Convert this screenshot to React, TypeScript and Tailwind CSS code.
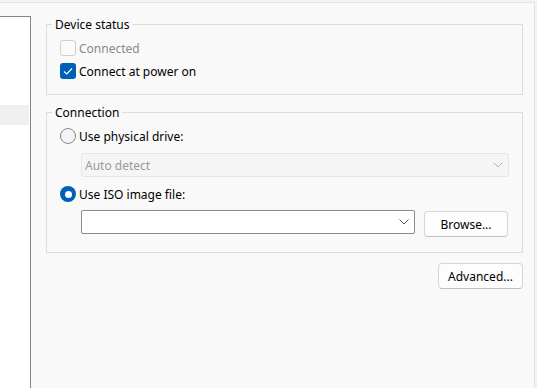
const Chevron = ({ color }: { color: string }) => (
  <svg width="10" height="6" viewBox="0 0 10 6" fill="none">
    <path d="M0.5 0.5 L5 5 L9.5 0.5" stroke={color} strokeWidth="1" />
  </svg>
);

const CheckRow = ({ label, checked, disabled }: { label: string; checked?: boolean; disabled?: boolean }) => (
  <div className="flex items-start h-[16px] gap-[3px]">
    {checked ? (
      <span className="w-[16px] h-[16px] rounded-[3px] bg-[#005fb8] flex items-center justify-center">
        <svg width="16" height="16" viewBox="0 0 16 16" fill="none">
          <path d="M4 8.5 L6.8 11 L12 5.5" stroke="#ffffff" strokeWidth="1.1" />
        </svg>
      </span>
    ) : (
      <span className="w-[16px] h-[16px] rounded-[3px] border border-[#cfcfcf] bg-[#fbfbfb]" />
    )}
    <span className={`h-[16px] leading-[18px] ${disabled ? 'text-[#8a8a8a]' : 'text-black'}`}>{label}</span>
  </div>
);

const RadioRow = ({ label, selected }: { label: string; selected?: boolean }) => (
  <div className="flex items-start h-[16px] gap-[3px]">
    {selected ? (
      <span className="w-[16px] h-[16px] rounded-full bg-[#005fb8] flex items-center justify-center">
        <span className="w-[7px] h-[7px] rounded-full bg-white" />
      </span>
    ) : (
      <span className="w-[16px] h-[16px] rounded-full border border-[#8a8a8a] bg-[#f3f3f3]" />
    )}
    <span className="h-[16px] leading-[18px]">{label}</span>
  </div>
);

const Button = ({ label, width }: { label: string; width: string }) => (
  <button
    className={`${width} h-[26px] rounded-[4px] border border-[#d5d5d5] border-b-[#bfbfbf] bg-[#fdfdfd] pt-[1px] text-[12px] leading-[16px] text-black`}
  >
    {label}
  </button>
);

export default function App() {
  return (
    <div className="w-[537px] h-[388px] overflow-hidden bg-[#f3f3f3] pt-[2px] font-['Segoe_UI','Noto_Sans',sans-serif] text-[12px] text-black">
      <div className="flex h-[386px] w-[535px] border-t border-r border-[#e3e3e3] bg-[#f9f9f9]">
        {/* tree panel on the left */}
        <div className="mt-[13px] w-[31px] border-t border-r border-[#868686] bg-white pt-[88px]">
          <div className="h-[20px] w-[29px] bg-[#efefef]" />
        </div>

        <div className="ml-[15px] flex w-[477px] flex-col pt-[13px]">
          <fieldset className="border border-[#dcdcdc] p-0">
            <legend className="ml-[5px] h-[16px] px-[3px] leading-[18px]">Device status</legend>
            <div className="flex flex-col gap-[7px] pl-[13px] pt-[8px] pb-[15px]">
              <CheckRow label="Connected" disabled />
              <CheckRow label="Connect at power on" checked />
            </div>
          </fieldset>

          <fieldset className="mt-[9px] border border-[#dcdcdc] p-0">
            <legend className="ml-[5px] h-[16px] px-[3px] leading-[18px]">Connection</legend>
            <div className="flex flex-col pl-[13px] pt-[8px] pb-[15px]">
              <RadioRow label="Use physical drive:" />
              <div className="ml-[21px] mt-[9px] flex h-[24px] w-[428px] items-center justify-between rounded-[3px] border border-[#e5e5e5] bg-[#f5f5f5] pl-[3px] pr-[5px]">
                <span className="pt-[1px] leading-[16px] text-[#9a9a9a]">Auto detect</span>
                <Chevron color="#b4b4b4" />
              </div>
              <div className="mt-[9px]">
                <RadioRow label="Use ISO image file:" selected />
              </div>
              <div className="ml-[21px] mt-[8px] flex items-start">
                <div className="flex h-[24px] w-[334px] items-center justify-end rounded-[2px] border border-[#8a8a8a] bg-white pr-[5px]">
                  <Chevron color="#5f5f5f" />
                </div>
                <div className="ml-[9px] mt-[1px]">
                  <Button label="Browse..." width="w-[84px]" />
                </div>
              </div>
            </div>
          </fieldset>

          <div className="mt-[10px] flex justify-end">
            <Button label="Advanced..." width="w-[85px]" />
          </div>
        </div>
      </div>
    </div>
  );
}
